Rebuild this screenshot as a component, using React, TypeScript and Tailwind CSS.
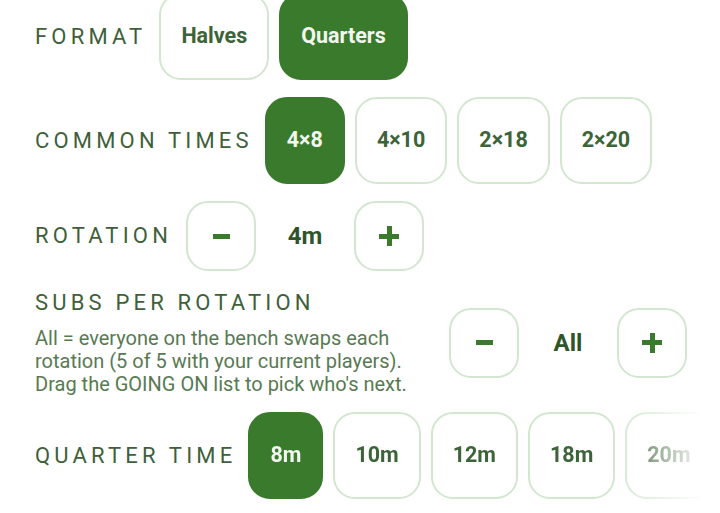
import React from "react";

const font = { fontFamily: "Roboto, 'Noto Sans', sans-serif" };

function Label({ children }: { children: React.ReactNode }) {
  return (
    <div className="text-[22px] leading-none tracking-[0.19em] text-[#3f5f3b] whitespace-nowrap">
      {children}
    </div>
  );
}

function Chip({ label, active }: { label: string; active?: boolean }) {
  return (
    <button
      className={
        "h-[87px] px-[20px] rounded-[22px] text-[21.5px] font-bold shrink-0 flex items-center justify-center border-2 " +
        (active
          ? "bg-[#3a7a2c] border-[#3a7a2c] text-[#f1f7ee]"
          : "bg-white border-[#d3e6d0] text-[#3d6338]")
      }
    >
      {label}
    </button>
  );
}

function Stepper({ value }: { value: string }) {
  return (
    <div className="flex items-center gap-4 shrink-0">
      <button className="w-[70px] h-[70px] rounded-[22px] border-2 border-[#d3e6d0] bg-white flex items-center justify-center">
        <span className="block w-[17px] h-[5px] bg-[#3a7a2c]" />
      </button>
      <div className="w-[66px] text-center text-[24px] font-bold text-[#2f5429]">{value}</div>
      <button className="w-[70px] h-[70px] rounded-[22px] border-2 border-[#d3e6d0] bg-white flex items-center justify-center">
        <span className="relative block w-[20px] h-[20px]">
          <span className="absolute left-0 top-[7.5px] w-[20px] h-[5px] bg-[#3a7a2c]" />
          <span className="absolute top-0 left-[7.5px] w-[5px] h-[20px] bg-[#3a7a2c]" />
        </span>
      </button>
    </div>
  );
}

export default function App() {
  return (
    <div className="w-[720px] h-[513px] overflow-hidden bg-white" style={font}>
      <div className="-mt-[7px] pl-[35px] pr-[33px] flex flex-col">
        <div className="flex items-center gap-[13px]">
          <Label>FORMAT</Label>
          <div className="flex gap-[10px]">
            <Chip label="Halves" />
            <Chip label="Quarters" active />
          </div>
        </div>

        <div className="flex items-center gap-[12px] mt-[17px]">
          <Label>COMMON TIMES</Label>
          <div className="flex gap-[10px]">
            <Chip label="4×8" active />
            <Chip label="4×10" />
            <Chip label="2×18" />
            <Chip label="2×20" />
          </div>
        </div>

        <div className="flex items-center gap-[14px] mt-[17px]">
          <Label>ROTATION</Label>
          <Stepper value="4m" />
        </div>

        <div className="flex items-center justify-between mt-[21px]">
          <div className="w-[400px]">
            <Label>SUBS PER ROTATION</Label>
            <p className="mt-[13px] text-[20px] leading-[23px] text-[#587a53]">
              All = everyone on the bench swaps each rotation (5 of 5 with your current players). Drag the GOING ON list to pick who's next.
            </p>
          </div>
          <div className="-mt-[3px]">
            <Stepper value="All" />
          </div>
        </div>

        <div className="flex items-center gap-[12px] mt-[16px]">
          <Label>QUARTER TIME</Label>
          <div className="flex-1 min-w-0 -mr-[18px] overflow-hidden [mask-image:linear-gradient(to_right,#000_80%,transparent_100%)]">
            <div className="flex gap-[10px]">
              <Chip label="8m" active />
              <Chip label="10m" />
              <Chip label="12m" />
              <Chip label="18m" />
              <Chip label="20m" />
            </div>
          </div>
        </div>
      </div>
    </div>
  );
}
